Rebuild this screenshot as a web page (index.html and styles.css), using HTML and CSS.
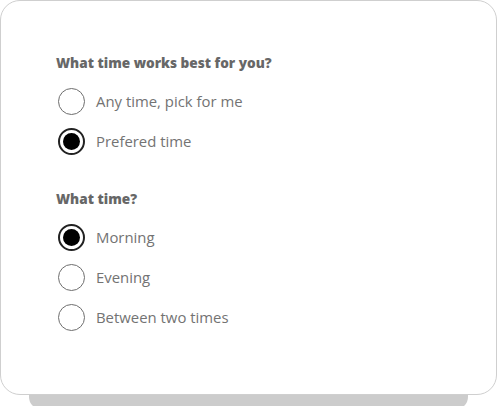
FILE: index.html
```html
<!DOCTYPE html>
<html lang="en">
<head>
    <meta charset="UTF-8">
    <meta name="viewport" content="width=device-width, initial-scale=1.0">
    <title>Time preference</title>
    <link rel="stylesheet" href="styles.css">
</head>
<body>
    <div class="card">
        <section class="group">
            <h3>What time works best for you?</h3>
            <label class="option"><span class="radio"></span>Any time, pick for me</label>
            <label class="option"><span class="radio checked"></span>Prefered time</label>
        </section>

        <section class="group">
            <h3>What time?</h3>
            <label class="option"><span class="radio checked"></span>Morning</label>
            <label class="option"><span class="radio"></span>Evening</label>
            <label class="option"><span class="radio"></span>Between two times</label>
        </section>
    </div>
    <div class="card-shadow"></div>
</body>
</html>
```

FILE: styles.css
```css
body {
    font-family: 'Open Sans', sans-serif;
    margin: 0;
    padding: 0;
    background: #fff;
}

.card {
    width: 497px;
    height: 395px;
    box-sizing: border-box;
    border: 1px solid #cfcfcf;
    border-radius: 20px;
    background: #fff;
    padding: 52px 56px 52px 55px;
}

.card-shadow {
    margin: 0 29px;
    height: 14px;
    background: #cccccc;
    border-radius: 0 0 12px 12px;
}

.group {
    margin-bottom: 28px;
}

.group h3 {
    margin: 0 0 8px 0;
    font-size: 13.6px;
    line-height: 20px;
    font-weight: 800;
    color: #676767;
}

.option {
    display: flex;
    align-items: center;
    gap: 11px;
    height: 40px;
    padding-left: 2px;
    font-size: 14.9px;
    color: #737373;
}

.radio {
    width: 27px;
    height: 27px;
    box-sizing: border-box;
    border: 1.5px solid #6e6e6e;
    border-radius: 50%;
    display: flex;
    align-items: center;
    justify-content: center;
}

.radio.checked {
    border: 2px solid #222;
}

.radio.checked::after {
    content: '';
    width: 17px;
    height: 17px;
    border-radius: 50%;
    background: #000;
}
```
